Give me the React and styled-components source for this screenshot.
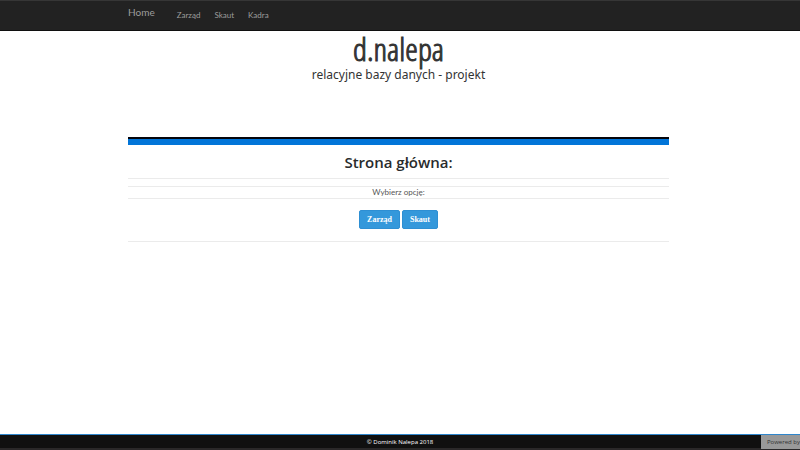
import React from "react";
import styled, { createGlobalStyle } from "styled-components";

const GlobalStyle = createGlobalStyle`
  *, *::before, *::after { box-sizing: border-box; }
  body {
    margin: 0;
    background: #fff;
    color: #292b2c;
    font-family: Lato, "Noto Sans", sans-serif;
    font-size: 8px;
    line-height: 12px;
  }
`;

const Page = styled.div`
  min-height: 100vh;
  display: flex;
  flex-direction: column;
`;

const Container = styled.div`
  width: 68%;
  padding-right: 3px;
  margin: 0 auto;
`;

const Navbar = styled.nav`
  height: 31px;
  background: #222;
  border-top: 1px solid #363636;
  border-bottom: 1px solid #101010;
`;

const NavRow = styled(Container)`
  display: flex;
  align-items: flex-start;
  gap: 14px;
`;

const Brand = styled.a`
  margin-right: 8px;
  padding-top: 5px;
  color: #9d9d9d;
  font-size: 10px;
  text-decoration: none;
`;

const NavLink = styled.a`
  padding-top: 8px;
  color: #9d9d9d;
  text-decoration: none;
`;

const Main = styled(Container)`
  flex: 1;
  text-align: center;
`;

const Header = styled.header`
  height: 106px;
  color: #333;
`;

const Logo = styled.div`
  font-family: "Open Sans Condensed Light", "Liberation Sans Narrow", sans-serif;
  font-size: 32px;
  line-height: 36px;
  -webkit-text-stroke: 1px #333;
`;

const Tagline = styled.div`
  font-family: "Noto Sans", sans-serif;
  font-size: 12px;
  line-height: 16px;
`;

const Stripe = styled.div`
  height: 8px;
  background: #0275d8;
  border-top: 2px solid #05050c;
`;

const Title = styled.h1`
  margin: 0;
  padding: 7px 0 6px;
  font-family: "Open Sans", sans-serif;
  font-size: 15px;
  line-height: 20px;
  font-weight: 600;
`;

const Rule = styled.hr`
  height: 1px;
  margin: 0;
  border: 0;
  background: #ebebeb;
`;

const Prompt = styled.p`
  margin: 7px 0 0;
  border: solid #ebebeb;
  border-width: 1px 0;
  line-height: 11px;
  color: #555;
`;

const Options = styled.div`
  display: flex;
  justify-content: center;
  gap: 2px;
  padding: 11px 0 12px;
`;

const Button = styled.button`
  height: 19px;
  padding: 0 7px;
  border: 1px solid #2e8fd3;
  border-radius: 2px;
  background: #3498db;
  color: #fff;
  font-family: "Liberation Serif", serif;
  font-size: 8px;
  font-weight: 700;
  line-height: 12px;
`;

const Footer = styled.footer`
  display: grid;
  grid-template-columns: 1fr auto 1fr;
  height: 16px;
  background: #101010;
  border-top: 1px solid #2f86cc;
  border-bottom: 2px solid #2a2829;
  color: #fff;
  font-family: "Open Sans", sans-serif;
  font-size: 6px;
  line-height: 14px;
`;

const Copyright = styled.span`
  grid-column: 2;
`;

const Powered = styled.span`
  justify-self: end;
  width: 39px;
  padding-left: 6px;
  overflow: hidden;
  white-space: nowrap;
  background: #999;
  color: #333;
`;

export default function App() {
  return (
    <Page>
      <GlobalStyle />
      <Navbar>
        <NavRow>
          <Brand href="#home">Home</Brand>
          <NavLink href="#zarzad">Zarząd</NavLink>
          <NavLink href="#skaut">Skaut</NavLink>
          <NavLink href="#kadra">Kadra</NavLink>
        </NavRow>
      </Navbar>
      <Main as="main">
        <Header>
          <Logo>d.nalepa</Logo>
          <Tagline>relacyjne bazy danych - projekt</Tagline>
        </Header>
        <Stripe />
        <Title>Strona główna:</Title>
        <Rule />
        <Prompt>Wybierz opcję:</Prompt>
        <Options>
          <Button type="button">Zarząd</Button>
          <Button type="button">Skaut</Button>
        </Options>
        <Rule />
      </Main>
      <Footer>
        <Copyright>© Dominik Nalepa 2018</Copyright>
        <Powered>Powered by</Powered>
      </Footer>
    </Page>
  );
}
